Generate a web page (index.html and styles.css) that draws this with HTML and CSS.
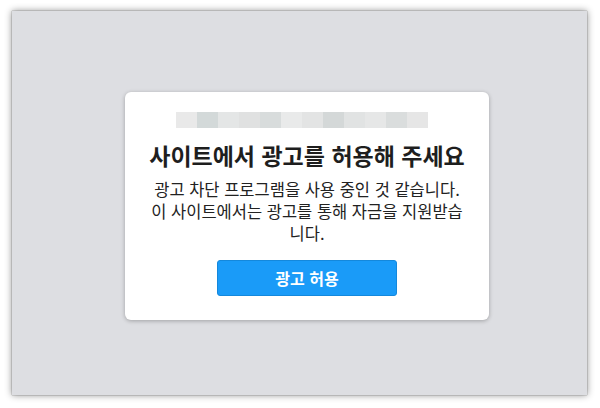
FILE: index.html
```html
<!DOCTYPE html>
<html lang="ko">
<head>
<meta charset="utf-8">
<link rel="stylesheet" href="styles.css">
</head>
<body>
<div class="panel">
  <div class="card">
    <div class="blur-bar">
      <span class="b1"></span><span class="b2"></span><span class="b3"></span><span class="b4"></span>
      <span class="b5"></span><span class="b6"></span><span class="b7"></span><span class="b8"></span>
      <span class="b9"></span><span class="b10"></span><span class="b11"></span><span class="b12"></span>
    </div>
    <h1 class="title">사이트에서 광고를 허용해 주세요</h1>
    <p class="message"><span class="line">광고 차단 프로그램을 사용 중인 것 같습니다.</span><span class="line">이 사이트에서는 광고를 통해 자금을 지원받습니다.</span></p>
    <button class="allow-btn" type="button">광고 허용</button>
  </div>
</div>
</body>
</html>
```
FILE: styles.css
```css
html, body {
  margin: 0;
  padding: 0;
  background: #ffffff;
}
body {
  width: 600px;
  height: 408px;
  overflow: hidden;
  font-family: "Noto Sans CJK KR", "Noto Sans", sans-serif;
}
.panel {
  box-sizing: border-box;
  margin: 11px 13px 13px 12px;
  width: 575px;
  height: 384px;
  background: #dddee2;
  box-shadow: 0 0 1px rgba(0,0,0,0.6), 0 0 7px rgba(0,0,0,0.45);
  padding: 81px 98px 75px 113px;
}
.card {
  box-sizing: border-box;
  height: 228px;
  background: #ffffff;
  border-radius: 6px;
  box-shadow: 0 1px 4px rgba(0,0,0,0.28);
  padding: 20px 10px 24px;
  display: flex;
  flex-direction: column;
  align-items: center;
}
.blur-bar {
  align-self: flex-start;
  margin-left: 41px;
  display: flex;
  height: 16px;
}
.blur-bar span { width: 21px; height: 16px; }
.b1 { background: #e9e9e9; }
.b2 { background: #d3d9d9; }
.b3 { background: #e4e6e6; }
.b4 { background: #e0e1e1; }
.b5 { background: #d8dcdc; }
.b6 { background: #e9eaea; }
.b7 { background: #e3e4e4; }
.b8 { background: #d4d8d8; }
.b9 { background: #e1e3e3; }
.b10 { background: #e6e7e7; }
.b11 { background: #dadddd; }
.b12 { background: #e6e6e6; }
.title {
  margin: 12px 0 0;
  font-size: 23px;
  line-height: 30px;
  font-weight: 700;
  color: #1e1e1e;
  text-align: center;
  white-space: nowrap;
}
.message {
  margin: 8px 0 0;
  width: 319px;
  font-size: 16.5px;
  line-height: 22px;
  color: #222222;
  text-align: center;
}
.message .line {
  display: block;
}
.allow-btn {
  margin-top: 16px;
  width: 180px;
  height: 36px;
  background: #1a9bf8;
  border: 1px solid #1488dc;
  border-radius: 3px;
  color: #ffffff;
  font-family: "Noto Sans CJK KR", "Noto Sans", sans-serif;
  font-size: 16px;
  font-weight: 700;
  padding: 0;
}
```
